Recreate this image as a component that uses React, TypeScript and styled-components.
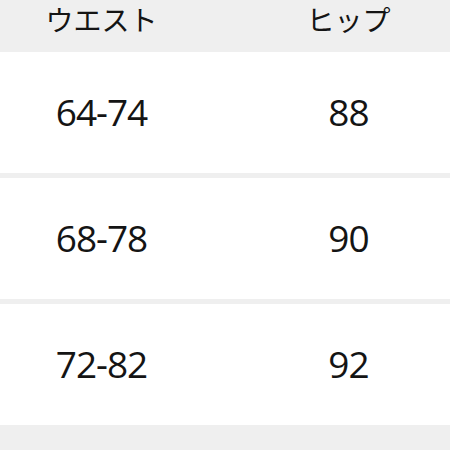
import React from "react";
import styled, { createGlobalStyle } from "styled-components";

const Global = createGlobalStyle`
  html, body { margin: 0; padding: 0; background: #ffffff; overflow: hidden; }
  body { width: 450px; height: 450px; }
`;

const Viewport = styled.div`
  width: 450px;
  height: 450px;
  overflow: hidden;
  background: #efefef;
`;

const Table = styled.div`
  width: 494px;
  margin-left: -22px;
  display: flex;
  flex-direction: column;
  background: #efefef;
  color: #141414;
`;

const Body = styled.div`
  display: flex;
  flex-direction: column;
  gap: 5px;
`;

const Row = styled.div<{ $head?: boolean }>`
  display: grid;
  grid-template-columns: 1fr 1fr;
  align-items: ${(p) => (p.$head ? "start" : "center")};
  height: ${(p) => (p.$head ? "52px" : "121px")};
  background: ${(p) => (p.$head ? "#efefef" : "#ffffff")};
`;

const Cell = styled.div<{ $head?: boolean }>`
  text-align: center;
  font-family: ${(p) =>
    p.$head ? `"Noto Sans CJK JP", sans-serif` : `"Open Sans", "Noto Sans", sans-serif`};
  font-size: ${(p) => (p.$head ? "28px" : "37px")};
  letter-spacing: ${(p) => (p.$head ? "0" : "-1px")};
  line-height: ${(p) => (p.$head ? "36px" : "1")};
  padding-top: ${(p) => (p.$head ? "1px" : "0")};
  padding-bottom: ${(p) => (p.$head ? "0" : "2px")};
`;

const rows = [
  ["64-74", "88"],
  ["68-78", "90"],
  ["72-82", "92"],
];

export default function App() {
  return (
    <>
      <Global />
      <Viewport>
        <Table>
          <Row $head>
            <Cell $head>ウエスト</Cell>
            <Cell $head>ヒップ</Cell>
          </Row>
          <Body>
            {rows.map((r) => (
              <Row key={r[0]}>
                <Cell>{r[0]}</Cell>
                <Cell>{r[1]}</Cell>
              </Row>
            ))}
          </Body>
        </Table>
      </Viewport>
    </>
  );
}
